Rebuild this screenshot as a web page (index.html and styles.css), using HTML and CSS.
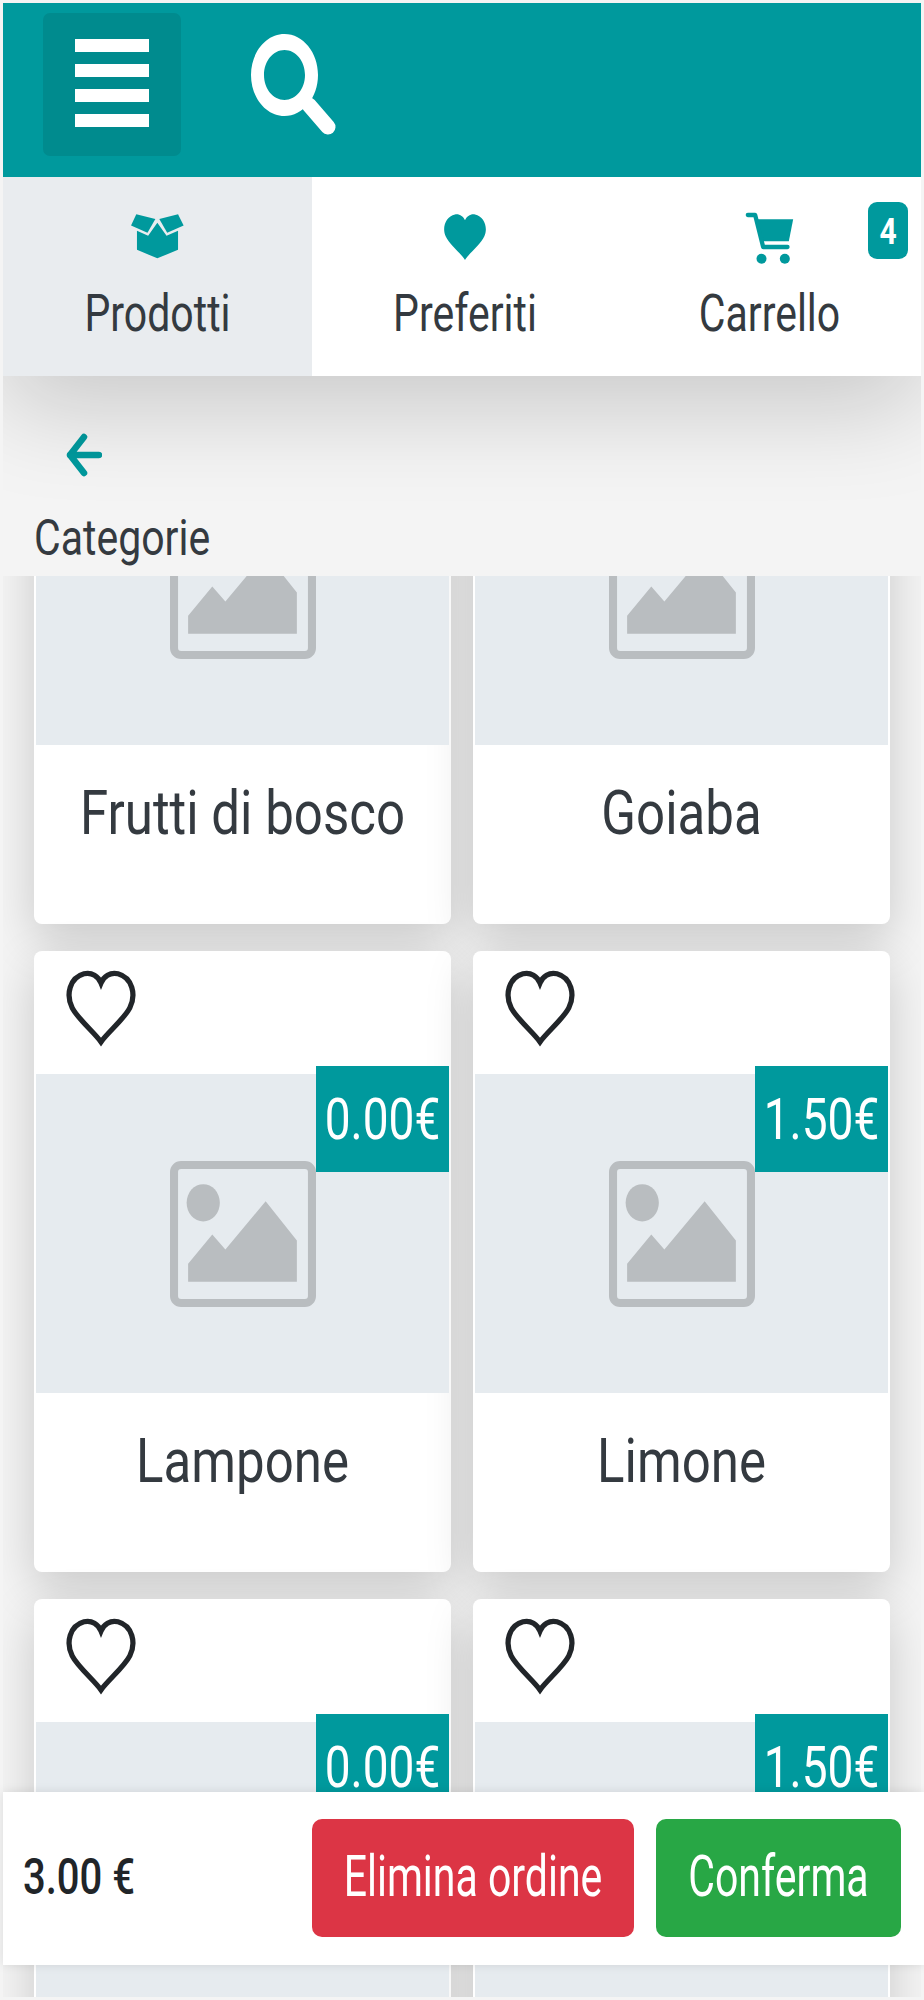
FILE: index.html
```html
<!DOCTYPE html>
<html lang="it">
<head>
<meta charset="utf-8">
<title>Prodotti</title>
<link rel="stylesheet" href="styles.css">
</head>
<body>
<svg class="defs" aria-hidden="true">
  <symbol id="pic" viewBox="0 0 145 145">
    <rect x="4" y="4" width="137" height="137" rx="7" fill="none" stroke="currentColor" stroke-width="8"/>
    <ellipse cx="33" cy="41.5" rx="16.5" ry="18.5" fill="currentColor"/>
    <path d="M18 120V102L42 73L55 88L95 40L126 79V120Z" fill="currentColor"/>
  </symbol>
  <symbol id="heart" viewBox="-5 -5 110 120">
    <path d="M50 106C40 92 14 70 6 54C-4 34 2 8 24 2C36 -1 46 6 50 16C54 6 64 -1 76 2C98 8 104 34 94 54C86 70 60 92 50 106Z"/>
  </symbol>
</svg>
<div class="viewport">
  <div class="app">
    <header class="topbar">
      <button class="menu-btn" aria-label="Menu"><span></span><span></span><span></span><span></span></button>
      <svg class="search" viewBox="0 0 120 130" aria-hidden="true">
        <path fill-rule="evenodd" d="M55.5 14C37 14 22 32.4 22 55S37 96 55.5 96S89 77.6 89 55S74 14 55.5 14ZM55.5 30C66.8 30 76 41.2 76 55S66.8 80 55.5 80S35 68.8 35 55S44.2 30 55.5 30Z"/>
        <path d="M80 85L99 107" fill="none" stroke="#fff" stroke-width="15" stroke-linecap="round"/>
      </svg>
    </header>
    <nav class="tabs">
      <a class="tab tab-active">
        <svg class="tab-icon box" viewBox="60 68 165 140" aria-hidden="true">
          <path d="M78 72L136 86L112 128L62 106Z"/>
          <path d="M205 72L222 106L172 128L148 86Z"/>
          <path d="M80 122L114 137L142 98L170 137L205 122V180L142 206L80 180Z"/>
        </svg>
        <span class="tab-label">Prodotti</span>
      </a>
      <a class="tab">
        <svg class="tab-icon fav" viewBox="0 0 100 110" aria-hidden="true">
          <path d="M50 110C40 94 12 72 4 54C-6 32 4 6 26 1C36 -1 46 5 50 15C54 5 64 -1 74 1C96 6 106 32 96 54C88 72 60 94 50 110Z"/>
        </svg>
        <span class="tab-label">Preferiti</span>
      </a>
      <a class="tab">
        <svg class="tab-icon cart" viewBox="76 62 146 156" aria-hidden="true">
          <path d="M110 84H220L207 150H124Z"/>
          <path d="M84 71H106L130 167H203" fill="none" stroke="#00999d" stroke-width="13" stroke-linecap="round" stroke-linejoin="round"/>
          <circle cx="125" cy="202" r="15"/>
          <circle cx="195" cy="202" r="15"/>
        </svg>
        <span class="tab-label">Carrello</span>
        <span class="badge"><span class="badge-num">4</span></span>
      </a>
    </nav>
    <section class="catbar">
      <svg class="back" viewBox="0 0 36 44" aria-hidden="true">
        <path d="M18 4L4 22L18 40M4 22H33" fill="none" stroke="#00999d" stroke-width="6.5" stroke-linecap="round" stroke-linejoin="round"/>
      </svg>
      <span class="cat-label">Categorie</span>
    </section>
    <main class="scroller">
      <div class="grid">
        <article class="card">
          <div class="card-top"></div>
          <div class="thumb"><svg class="pic"><use href="#pic"/></svg></div>
          <div class="name"><span class="name-text">Frutti di bosco</span></div>
        </article>
        <article class="card">
          <div class="card-top"></div>
          <div class="thumb"><svg class="pic"><use href="#pic"/></svg></div>
          <div class="name"><span class="name-text">Goiaba</span></div>
        </article>
        <article class="card">
          <div class="card-top"><svg class="like"><use href="#heart"/></svg></div>
          <div class="thumb"><div class="price"><span class="price-text">0.00€</span></div><svg class="pic"><use href="#pic"/></svg></div>
          <div class="name"><span class="name-text">Lampone</span></div>
        </article>
        <article class="card">
          <div class="card-top"><svg class="like"><use href="#heart"/></svg></div>
          <div class="thumb"><div class="price"><span class="price-text">1.50€</span></div><svg class="pic"><use href="#pic"/></svg></div>
          <div class="name"><span class="name-text">Limone</span></div>
        </article>
        <article class="card">
          <div class="card-top"><svg class="like"><use href="#heart"/></svg></div>
          <div class="thumb"><div class="price"><span class="price-text">0.00€</span></div></div>
        </article>
        <article class="card">
          <div class="card-top"><svg class="like"><use href="#heart"/></svg></div>
          <div class="thumb"><div class="price"><span class="price-text">1.50€</span></div></div>
        </article>
      </div>
    </main>
  </div>
  <footer class="footer">
    <span class="total"><span class="total-text">3.00 €</span></span>
    <div class="actions">
      <button class="btn btn-red"><span class="btn-text">Elimina ordine</span></button>
      <button class="btn btn-green"><span class="btn-text">Conferma</span></button>
    </div>
  </footer>
</div>
</body>
</html>
```
FILE: styles.css
```css
* { box-sizing: border-box; }
html, body { margin: 0; padding: 0; }
body { background: #f4f4f4; font-family: Roboto, "Liberation Sans", sans-serif; color: #343a40; overflow: hidden; }
.defs { width: 0; height: 0; display: block; }
.viewport { position: relative; width: 924px; height: 2000px; padding: 3px 3px 3px 3px; overflow: hidden; }
.app { height: 1994px; display: flex; flex-direction: column; overflow: hidden; background: #f4f4f4; }

.topbar { flex: 0 0 174px; background: #00999d; display: flex; align-items: flex-start; padding: 10px 0 0 40px; position: relative; z-index: 3; }
.menu-btn { width: 138px; height: 143px; border: 0; border-radius: 7px; background: #008b8e; display: flex; flex-direction: column; align-items: center; justify-content: center; gap: 12px; padding: 0 0 3px; }
.menu-btn span { display: block; width: 74px; height: 13px; background: #fff; }
.search { width: 120px; height: 130px; margin: 7px 0 0 48px; fill: #fff; }

.tabs { flex: 0 0 199px; display: grid; grid-template-columns: 309px 306px 1fr; background: #fff; position: relative; z-index: 2; box-shadow: 0 32px 96px rgba(0, 0, 0, .175); }
.tab { position: relative; display: flex; flex-direction: column; align-items: center; }
.tab-active { background: #e9ecef; }
.tab-icon { display: block; fill: #00999d; }
.box { width: 55px; height: 46px; margin-top: 36px; }
.fav { width: 42px; height: 46px; margin-top: 37px; }
.cart { width: 49px; height: 52px; margin-top: 35px; }
.tab-label { display: block; position: absolute; top: 112px; font-size: 41px; line-height: 48px; transform: scaleY(1.25); }
.badge { position: absolute; top: 25px; right: 13px; width: 40px; height: 57px; border-radius: 9px; background: #00999d; color: #fff; display: flex; align-items: center; justify-content: center; font-size: 30px; font-weight: 700; }
.badge-num { transform: scaleY(1.25); }

.catbar { flex: 0 0 200px; background: #f4f4f4; position: relative; z-index: 1; display: flex; flex-direction: column; align-items: flex-start; padding: 57px 0 0 31px; }
.back { width: 36px; height: 44px; margin-left: 32px; display: block; }
.cat-label { font-size: 41px; line-height: 48px; margin-top: 37px; transform: scaleY(1.2); transform-origin: left center; }

.scroller { flex: 1; overflow: hidden; min-height: 0; }
.grid { display: grid; grid-template-columns: 417px 417px; column-gap: 22px; row-gap: 27px; padding: 0 0 0 31px; margin-top: -273px; }
.card { height: 621px; background: #fff; border-radius: 8px; padding: 0 2px; box-shadow: 0 16px 48px rgba(0, 0, 0, .175); }
.card-top { height: 123px; padding: 18px 0 0 30px; }
.like { display: block; width: 72px; height: 79px; fill: none; stroke: #212529; stroke-width: 8; margin-left: -1px; }
.thumb { height: 319px; background: #e6ebef; position: relative; display: flex; align-items: center; justify-content: center; color: #b9bdc0; }
.pic { width: 146px; height: 146px; display: block; color: #b9bdc0; }
.price { position: absolute; top: -8px; right: 0; width: 133px; height: 106px; background: #00999d; color: #fff; display: flex; align-items: center; justify-content: center; font-size: 46px; }
.price-text { transform: scaleY(1.25); }
.name { text-align: center; padding-top: 41px; font-size: 51px; line-height: 56px; }
.name-text { display: inline-block; transform: scaleY(1.2); }

.footer { position: absolute; left: 3px; right: 0; top: 1792px; height: 173px; background: #fff; z-index: 4; display: flex; align-items: flex-start; justify-content: space-between; padding: 27px 23px 0 20px; box-shadow: 0 0 10px rgba(0, 0, 0, .1); }
.total { font-size: 40px; font-weight: 500; line-height: 117px; color: #212529; }
.total-text { display: inline-block; transform: scaleY(1.25); }
.actions { display: flex; gap: 22px; }
.btn { height: 118px; border: 0; border-radius: 10px; color: #fff; font-family: inherit; font-size: 41px; padding: 0 0 5px; }
.btn-text { display: inline-block; transform: scaleY(1.4); }
.btn-red { width: 322px; background: #dc3545; }
.btn-green { width: 245px; background: #28a745; }
```
